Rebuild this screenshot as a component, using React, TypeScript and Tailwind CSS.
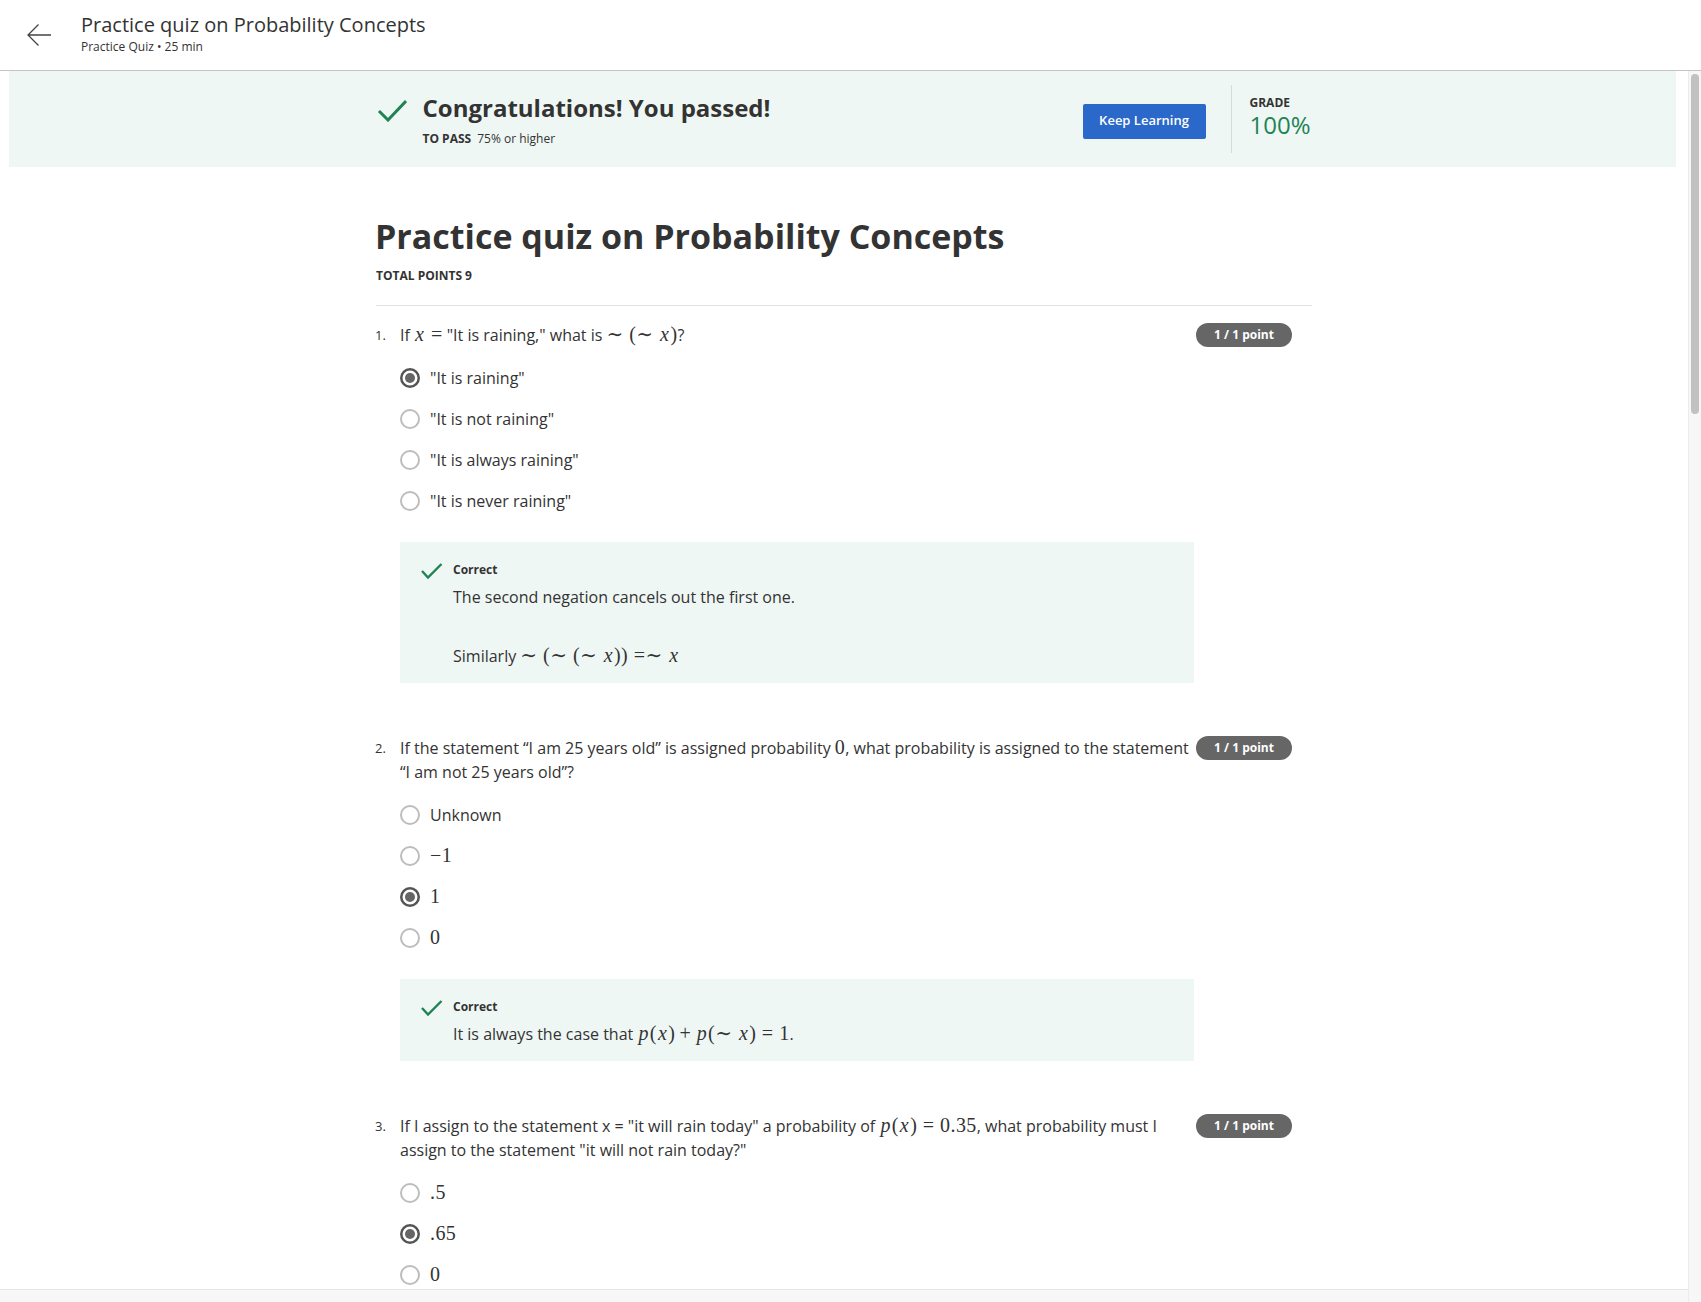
import React from 'react';

// Quiz results page: header, pass banner, graded questions

const GREEN = '#1f8354';

const M: React.FC<{ children: React.ReactNode }> = ({ children }) => (
  <span className="font-['Liberation_Serif','DejaVu_Serif',serif] text-[20px] leading-none tracking-[0.02em]">{children}</span>
);

// math italic variable, a bit wider like KaTeX
const V: React.FC<{ c: string }> = ({ c }) => <i className="mx-[0.05em]">{c}</i>;

// thick / medium math spaces (KaTeX-like)
const Th = () => <span className="inline-block w-[0.28em]" />;
const Md = () => <span className="inline-block w-[0.22em]" />;

const Radio: React.FC<{ selected?: boolean }> = ({ selected }) =>
  selected ? (
    <svg width="20" height="20" viewBox="0 0 20 20" className="shrink-0">
      <circle cx="10" cy="10" r="8.75" fill="white" stroke="#555" strokeWidth="2.5" />
      <circle cx="10" cy="10" r="5" fill="#666" />
    </svg>
  ) : (
    <svg width="20" height="20" viewBox="0 0 20 20" className="shrink-0">
      <circle cx="10" cy="10" r="9" fill="white" stroke="#bdbdbd" strokeWidth="2" />
    </svg>
  );

const SmallCheck = () => (
  <svg width="23" height="18" viewBox="0 0 23 18" className="shrink-0">
    <path d="M2 9 L8 15.5 L21.5 2" fill="none" stroke={GREEN} strokeWidth="2.4" />
  </svg>
);

interface Q {
  n: number;
  text: React.ReactNode;
  options: { label: React.ReactNode; selected?: boolean }[];
  feedback?: React.ReactNode;
}

const QUESTIONS: Q[] = [
  {
    n: 1,
    text: (
      <>
        If <M><V c="x" /><Th />=</M> "It is raining," what is <M>∼<Th />(∼<Th /><V c="x" />)</M>?
      </>
    ),
    options: [
      { label: '"It is raining"', selected: true },
      { label: '"It is not raining"' },
      { label: '"It is always raining"' },
      { label: '"It is never raining"' },
    ],
    feedback: (
      <>
        <p>The second negation cancels out the first one.</p>
        <p className="mt-[35px]">
          Similarly <M>∼<Th />(∼<Th />(∼<Th /><V c="x" />))<Th />=∼<Th /><V c="x" /></M>
        </p>
      </>
    ),
  },
  {
    n: 2,
    text: (
      <>
        If the statement “I am 25 years old” is assigned probability <M>0</M>, what probability is assigned to the statement “I am not 25 years old”?
      </>
    ),
    options: [
      { label: 'Unknown' },
      { label: <M>−1</M> },
      { label: <M>1</M>, selected: true },
      { label: <M>0</M> },
    ],
    feedback: (
      <p>
        It is always the case that <M><V c="p" />(<V c="x" />)<Md />+<Md /><V c="p" />(∼<Th /><V c="x" />)<Th />=<Th />1</M>.
      </p>
    ),
  },
  {
    n: 3,
    text: (
      <>
        If I assign to the statement x = "it will rain today" a probability of <M><V c="p" />(<V c="x" />)<Th />=<Th />0.35</M>, what probability must I assign to the statement "it will not rain today?"
      </>
    ),
    options: [
      { label: <M>.5</M> },
      { label: <M>.65</M>, selected: true },
      { label: <M>0</M> },
    ],
  },
];

const Question: React.FC<{ q: Q }> = ({ q }) => (
  <div className="flex mb-[53px]">
    <div className="w-[25px] shrink-0 -ml-[1px] text-[13px] leading-6 text-[#333]">{q.n}.</div>
    <div className="flex-1">
      <div className="flex items-start pr-[20px]">
        <p className="flex-1 text-base leading-6 text-[#333] pr-[5px]">{q.text}</p>
        <span className="w-[96px] h-6 shrink-0 rounded-full bg-[#666] text-white text-xs font-bold flex items-center justify-center">
          1 / 1 point
        </span>
      </div>
      <div className="mt-[10px]">
        {q.options.map((o, i) => (
          <div key={i} className="h-[41px] flex items-center gap-[10px] text-base text-[#333]">
            <Radio selected={o.selected} />
            <span>{o.label}</span>
          </div>
        ))}
      </div>
      {q.feedback && (
        <div className="mt-[21px] w-[794px] bg-[#eff7f4] pl-[20px] pt-[20px] pb-[15px] flex gap-[10px]">
          <SmallCheck />
          <div>
            <div className="text-xs font-bold text-[#333] leading-4">Correct</div>
            <div className="mt-[7px] text-base leading-6 text-[#333]">{q.feedback}</div>
          </div>
        </div>
      )}
    </div>
  </div>
);

export default function App() {
  return (
    <div className="h-[1302px] w-full flex flex-col overflow-hidden bg-white font-['Open_Sans',sans-serif] text-[#333]">
      {/* Header */}
      <header className="h-[71px] shrink-0 flex items-center border-b border-[#c4c4c4]">
        <svg width="26" height="26" viewBox="0 0 26 26" className="ml-[26px]">
          <path d="M25 13 H2 M12.5 2.5 L2 13 L12.5 23.5" fill="none" stroke="#444" strokeWidth="1.3" />
        </svg>
        <div className="ml-[29px] self-start mt-[12px]">
          <div className="text-[20px] leading-[26px] text-[#333]">Practice quiz on Probability Concepts</div>
          <div className="mt-[1px] text-xs leading-4 text-[#333]">Practice Quiz • 25 min</div>
        </div>
      </header>

      <div className="flex flex-1 min-h-0">
        <div className="flex-1 min-w-0 flex flex-col">
          <main className="flex-1 min-h-0 overflow-hidden">
            {/* Pass banner */}
            <div className="ml-[9px] mr-[12px] h-[96px] bg-[#eff7f4]">
              <div className="w-[936px] mx-auto h-full flex items-center">
                <svg width="30" height="24" viewBox="0 0 30 24" className="ml-[2px] -mt-[19px]">
                  <path d="M2 13 L11 22 L29 3" fill="none" stroke={GREEN} strokeWidth="3" />
                </svg>
                <div className="ml-[16px]">
                  <div className="text-[24px] font-bold leading-8 text-[#333]">Congratulations! You passed!</div>
                  <div className="mt-[7px] text-xs leading-4 text-[#333]">
                    <span className="font-bold">TO PASS</span>
                    <span className="ml-[6px]">75% or higher</span>
                  </div>
                </div>
                <button className="ml-auto mt-[4px] w-[123px] h-[35px] rounded-[2px] bg-[#2a69c9] text-white text-[13px] font-semibold">
                  Keep Learning
                </button>
                <div className="ml-[25px] w-px h-[68px] bg-[#d9d9d9]" />
                <div className="pl-[18px] w-[79px] -mt-[5px]">
                  <div className="text-xs font-bold leading-4 text-[#333]">GRADE</div>
                  <div className="text-[24px] leading-7" style={{ color: GREEN }}>100%</div>
                </div>
              </div>
            </div>

            {/* Quiz body */}
            <div className="w-[936px] mx-auto">
              <h1 className="mt-[49px] -ml-[1px] text-[34px] font-bold leading-10 text-[#333]">Practice quiz on Probability Concepts</h1>
              <div className="mt-[12px] text-xs font-bold leading-4 text-[#333]">TOTAL POINTS 9</div>
              <div className="mt-[21px] h-px bg-[#e0e0e0]" />
              <div className="mt-[17px]">
                {QUESTIONS.map((q) => (
                  <Question key={q.n} q={q} />
                ))}
              </div>
            </div>
          </main>
          {/* horizontal scroll track */}
          <div className="h-[13px] shrink-0 bg-[#f7f7f7] border-t border-[#e6e6e6]" />
        </div>
        {/* vertical scroll track */}
        <div className="w-[13px] shrink-0 bg-[#f7f7f7] border-l border-[#ececec] pt-[3px] flex justify-center">
          <div className="w-[8px] h-[340px] rounded-full bg-[#c1c1c1]" />
        </div>
      </div>
    </div>
  );
}
